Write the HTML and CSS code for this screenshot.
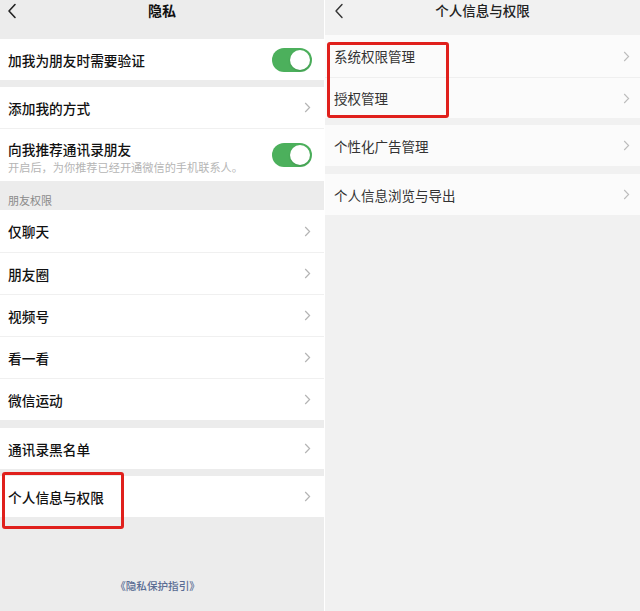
FILE: index.html
```html
<!DOCTYPE html>
<html lang="zh-CN">
<head>
<meta charset="utf-8">
<title>隐私</title>
<link rel="stylesheet" href="styles.css">
</head>
<body>
<div class="screens">
  <section class="panel left">
    <header class="nav">
      <svg class="back" width="10" height="16" viewBox="0 0 10 16"><path d="M8 1.5 L2 8 L8 14.5" fill="none" stroke="#222" stroke-width="1.6" stroke-linecap="round" stroke-linejoin="round"/></svg>
      <h1 class="title">隐私</h1>
    </header>

    <div class="group">
      <div class="row">
        <span class="label">加我为朋友时需要验证</span>
        <span class="toggle"><span class="knob"></span></span>
      </div>
    </div>

    <div class="group before-section">
      <div class="row">
        <span class="label">添加我的方式</span>
        <svg class="chev" width="7" height="11" viewBox="0 0 7 11"><path d="M1.2 1 L5.6 5.5 L1.2 10" fill="none" stroke="#b4b4b4" stroke-width="1.2"/></svg>
      </div>
      <div class="row tall">
        <div class="labels">
          <span class="label">向我推荐通讯录朋友</span>
          <span class="sub">开启后，为你推荐已经开通微信的手机联系人。</span>
        </div>
        <span class="toggle"><span class="knob"></span></span>
      </div>
    </div>

    <div class="section">朋友权限</div>
    <div class="group flush">
      <div class="row r42"><span class="label">仅聊天</span><svg class="chev" width="7" height="11" viewBox="0 0 7 11"><path d="M1.2 1 L5.6 5.5 L1.2 10" fill="none" stroke="#b4b4b4" stroke-width="1.2"/></svg></div>
      <div class="row r42"><span class="label">朋友圈</span><svg class="chev" width="7" height="11" viewBox="0 0 7 11"><path d="M1.2 1 L5.6 5.5 L1.2 10" fill="none" stroke="#b4b4b4" stroke-width="1.2"/></svg></div>
      <div class="row r42"><span class="label">视频号</span><svg class="chev" width="7" height="11" viewBox="0 0 7 11"><path d="M1.2 1 L5.6 5.5 L1.2 10" fill="none" stroke="#b4b4b4" stroke-width="1.2"/></svg></div>
      <div class="row r42"><span class="label">看一看</span><svg class="chev" width="7" height="11" viewBox="0 0 7 11"><path d="M1.2 1 L5.6 5.5 L1.2 10" fill="none" stroke="#b4b4b4" stroke-width="1.2"/></svg></div>
      <div class="row r42"><span class="label">微信运动</span><svg class="chev" width="7" height="11" viewBox="0 0 7 11"><path d="M1.2 1 L5.6 5.5 L1.2 10" fill="none" stroke="#b4b4b4" stroke-width="1.2"/></svg></div>
    </div>

    <div class="group">
      <div class="row"><span class="label">通讯录黑名单</span><svg class="chev" width="7" height="11" viewBox="0 0 7 11"><path d="M1.2 1 L5.6 5.5 L1.2 10" fill="none" stroke="#b4b4b4" stroke-width="1.2"/></svg></div>
    </div>

    <div class="group marked">
      <div class="row"><span class="label">个人信息与权限</span><svg class="chev" width="7" height="11" viewBox="0 0 7 11"><path d="M1.2 1 L5.6 5.5 L1.2 10" fill="none" stroke="#b4b4b4" stroke-width="1.2"/></svg></div>
      <div class="redbox box-left"></div>
    </div>

    <div class="footer"><a class="guide">《隐私保护指引》</a></div>
  </section>

  <section class="panel right">
    <header class="nav">
      <svg class="back" width="10" height="16" viewBox="0 0 10 16"><path d="M8 1.5 L2 8 L8 14.5" fill="none" stroke="#333" stroke-width="1.4" stroke-linecap="round" stroke-linejoin="round"/></svg>
      <h1 class="title light">个人信息与权限</h1>
    </header>

    <div class="group first marked">
      <div class="row r42"><span class="label light">系统权限管理</span><svg class="chev" width="7" height="11" viewBox="0 0 7 11"><path d="M1.2 1 L5.6 5.5 L1.2 10" fill="none" stroke="#bcbcbc" stroke-width="1.1"/></svg></div>
      <div class="row"><span class="label light">授权管理</span><svg class="chev" width="7" height="11" viewBox="0 0 7 11"><path d="M1.2 1 L5.6 5.5 L1.2 10" fill="none" stroke="#bcbcbc" stroke-width="1.1"/></svg></div>
      <div class="redbox box-right"></div>
    </div>

    <div class="group">
      <div class="row"><span class="label light">个性化广告管理</span><svg class="chev" width="7" height="11" viewBox="0 0 7 11"><path d="M1.2 1 L5.6 5.5 L1.2 10" fill="none" stroke="#bcbcbc" stroke-width="1.1"/></svg></div>
    </div>

    <div class="group">
      <div class="row"><span class="label light">个人信息浏览与导出</span><svg class="chev" width="7" height="11" viewBox="0 0 7 11"><path d="M1.2 1 L5.6 5.5 L1.2 10" fill="none" stroke="#bcbcbc" stroke-width="1.1"/></svg></div>
    </div>
  </section>
</div>
</body>
</html>
```

FILE: styles.css
```css
* { box-sizing: border-box; margin: 0; padding: 0; }

html, body {
  width: 640px;
  height: 611px;
  overflow: hidden;
}

body {
  font-family: "Noto Sans CJK SC", "Noto Sans", sans-serif;
  background: #ffffff;
  color: #111;
}

.screens {
  display: flex;
  gap: 1px;
  height: 611px;
}

.panel {
  display: flex;
  flex-direction: column;
  height: 100%;
}

.panel.left {
  width: 324px;
  background: #ececec;
}

.panel.right {
  flex: 1;
  background: #f1f1f1;
}

.nav {
  position: relative;
  display: flex;
  align-items: flex-start;
  justify-content: center;
  height: 39px;
  padding-top: 0;
}

.right .nav { height: 35px; }

.back {
  position: absolute;
  left: 7px;
  top: 3px;
}

.right .back { left: 9px; }

.title {
  font-size: 14px;
  font-weight: 700;
  line-height: 20px;
  color: #111;
}

.title.light {
  font-weight: 500;
  color: #222;
  font-size: 13.5px;
}

.group {
  position: relative;
  background: #fff;
  display: flex;
  flex-direction: column;
  margin-bottom: 7px;
}

.group.before-section { margin-bottom: 0; }

.right .group { background: #fbfbfb; margin-bottom: 7px; }
.right .group + .group { margin-bottom: 8px; }

.group.flush { margin-bottom: 8px; }

.row {
  display: flex;
  align-items: center;
  justify-content: space-between;
  height: 41px;
  padding: 0 13px 0 8px;
  border-top: 1px solid #f0f0f0;
}

.right .row { padding: 0 10px 0 9px; border-top-color: #efefef; }

.row:first-child { border-top: none; }

.row.r42 { height: 42px; }

.row.tall { height: 53px; }

.labels {
  display: flex;
  flex-direction: column;
  gap: 1px;
  padding-top: 2px;
}

.label {
  font-size: 13.7px;
  line-height: 20px;
  color: #111;
  font-weight: 500;
}

.label.light {
  font-size: 13.5px;
  color: #333;
  font-weight: 400;
}

.sub {
  font-size: 11.2px;
  line-height: 14px;
  color: #b5b5b5;
}

.toggle {
  position: relative;
  width: 40px;
  height: 24px;
  border-radius: 12px;
  background: #4cb05c;
  margin-right: -1px;
}

.knob {
  position: absolute;
  right: 2px;
  top: 2px;
  width: 20px;
  height: 20px;
  border-radius: 50%;
  background: #fff;
  box-shadow: 0 1px 2px rgba(0,0,0,0.15);
}

.chev { flex: none; }

.section {
  height: 29px;
  padding: 12px 8px 0;
  font-size: 11px;
  line-height: 14px;
  color: #8a8a8a;
}

.footer {
  flex: 1;
  display: flex;
  justify-content: center;
  padding: 55px 9px 0 0;
}

.guide {
  font-size: 10.6px;
  line-height: 14px;
  font-weight: 500;
  color: #5a6c94;
}

.redbox {
  position: absolute;
  border: 3px solid #e0201c;
  border-radius: 3px;
  pointer-events: none;
}

.box-left {
  left: 2px;
  top: -4px;
  width: 122px;
  height: 57px;
}

.box-right {
  left: 2px;
  top: 7px;
  width: 122px;
  height: 76px;
}
```
